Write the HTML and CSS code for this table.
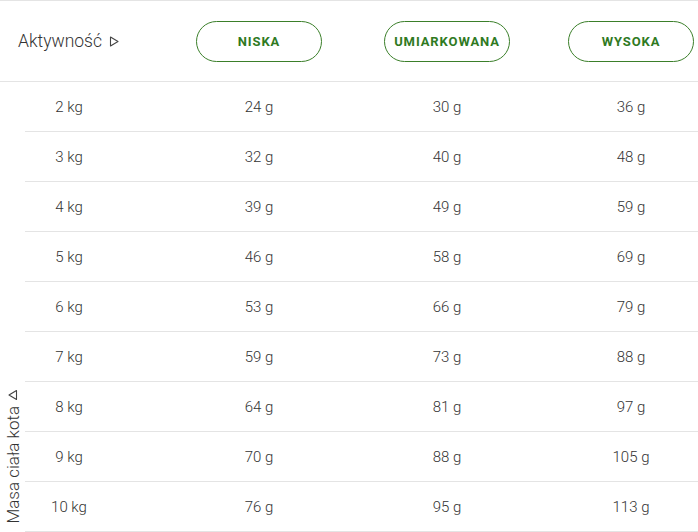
FILE: index.html
```html
<!DOCTYPE html>
<html lang="pl">
<head>
<meta charset="utf-8">
<link rel="stylesheet" href="styles.css">
</head>
<body>
<div class="table">
  <div class="head">
    <div class="head-label">Aktywność <svg class="tri" width="10" height="11" viewBox="0 0 10 11"><polygon points="1.5,1 9,5.5 1.5,10" fill="none" stroke="#444" stroke-width="1.1" stroke-linejoin="round"/></svg></div>
    <div class="cell"><span class="btn">NISKA</span></div>
    <div class="cell"><span class="btn">UMIARKOWANA</span></div>
    <div class="cell"><span class="btn">WYSOKA</span></div>
  </div>
  <div class="body">
    <div class="side"><span class="side-label">Masa ciała kota <svg class="tri" width="10" height="11" viewBox="0 0 10 11"><polygon points="1.5,1 9,5.5 1.5,10" fill="none" stroke="#444" stroke-width="1.1" stroke-linejoin="round"/></svg></span></div>
    <div class="rows">
      <div class="row"><div class="w">2 kg</div><div class="cell"><span class="v">24 g</span></div><div class="cell"><span class="v">30 g</span></div><div class="cell"><span class="v">36 g</span></div></div>
      <div class="row"><div class="w">3 kg</div><div class="cell"><span class="v">32 g</span></div><div class="cell"><span class="v">40 g</span></div><div class="cell"><span class="v">48 g</span></div></div>
      <div class="row"><div class="w">4 kg</div><div class="cell"><span class="v">39 g</span></div><div class="cell"><span class="v">49 g</span></div><div class="cell"><span class="v">59 g</span></div></div>
      <div class="row"><div class="w">5 kg</div><div class="cell"><span class="v">46 g</span></div><div class="cell"><span class="v">58 g</span></div><div class="cell"><span class="v">69 g</span></div></div>
      <div class="row"><div class="w">6 kg</div><div class="cell"><span class="v">53 g</span></div><div class="cell"><span class="v">66 g</span></div><div class="cell"><span class="v">79 g</span></div></div>
      <div class="row"><div class="w">7 kg</div><div class="cell"><span class="v">59 g</span></div><div class="cell"><span class="v">73 g</span></div><div class="cell"><span class="v">88 g</span></div></div>
      <div class="row"><div class="w">8 kg</div><div class="cell"><span class="v">64 g</span></div><div class="cell"><span class="v">81 g</span></div><div class="cell"><span class="v">97 g</span></div></div>
      <div class="row"><div class="w">9 kg</div><div class="cell"><span class="v">70 g</span></div><div class="cell"><span class="v">88 g</span></div><div class="cell"><span class="v">105 g</span></div></div>
      <div class="row"><div class="w">10 kg</div><div class="cell"><span class="v">76 g</span></div><div class="cell"><span class="v">95 g</span></div><div class="cell"><span class="v">113 g</span></div></div>
    </div>
  </div>
</div>
</body>
</html>
```

FILE: styles.css
```css
html, body {
  margin: 0;
  padding: 0;
  background: #fff;
}
body {
  font-family: Roboto, "Liberation Sans", sans-serif;
  color: #333;
  width: 698px;
  overflow: hidden;
}
.table {
  width: 698px;
}
.head {
  display: grid;
  grid-template-columns: 113px 209px 188px 184px;
  height: 80px;
  border-top: 1px solid #e4e4e4;
  border-bottom: 1px solid #e4e4e4;
  align-items: center;
}
.head-label {
  padding-left: 18px;
  font-size: 17.5px;
  font-weight: 300;
  white-space: nowrap;
  color: #333;
  display: flex;
  align-items: center;
  gap: 7px;
}
.tri {
  display: block;
  flex: none;
  width: 10px;
  height: 11px;
}
.cell {
  display: flex;
  justify-content: flex-end;
}
.btn {
  box-sizing: border-box;
  width: 126px;
  height: 41px;
  border: 1px solid #3b7f2a;
  border-radius: 21px;
  display: flex;
  align-items: center;
  justify-content: center;
  color: #2f7a1f;
  font-weight: 700;
  font-size: 13px;
  letter-spacing: 0.9px;
}
.body {
  display: flex;
}
.side {
  width: 25px;
  display: flex;
  align-items: flex-end;
  justify-content: center;
  padding-bottom: 9px;
  box-sizing: border-box;
}
.side-label {
  writing-mode: vertical-rl;
  transform: rotate(180deg);
  font-size: 17px;
  font-weight: 300;
  white-space: nowrap;
  color: #333;
  display: flex;
  align-items: center;
  gap: 5px;
}
.rows {
  flex: 1;
}
.row {
  display: grid;
  grid-template-columns: 88px 209px 188px 184px;
  height: 50px;
  border-bottom: 1px solid #e4e4e4;
  align-items: center;
  font-size: 15px;
  font-weight: 300;
  box-sizing: border-box;
}
.w {
  text-align: center;
}
.v {
  width: 126px;
  text-align: center;
}
```
